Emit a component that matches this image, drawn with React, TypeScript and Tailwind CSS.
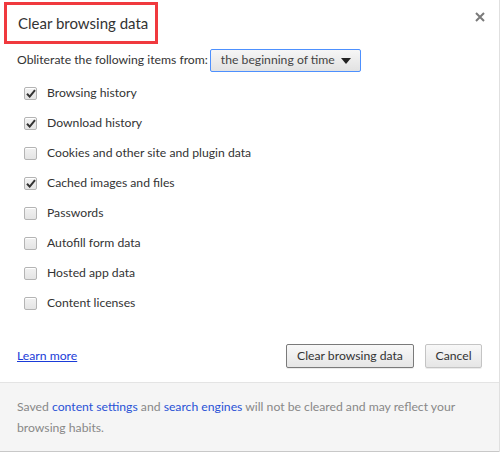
import React from "react";

const items = [
    { label: "Browsing history", checked: true },
    { label: "Download history", checked: true },
    { label: "Cookies and other site and plugin data", checked: false },
    { label: "Cached images and files", checked: true },
    { label: "Passwords", checked: false },
    { label: "Autofill form data", checked: false },
    { label: "Hosted app data", checked: false },
    { label: "Content licenses", checked: false },
];

function Check({ checked }: { checked: boolean }) {
    return (
        <span className="flex h-[13px] w-[13px] items-center justify-center rounded-[2px] border border-[#b4b4b4] bg-gradient-to-b from-[#f2f2f2] to-[#e4e4e4] shadow-[inset_0_1px_0_#fff]">
            {checked && (
                <svg width="10" height="9" viewBox="0 0 10 9">
                    <path d="M1 4.8 L3.7 7.6 L9 1.2" fill="none" stroke="#333" strokeWidth="2" />
                </svg>
            )}
        </span>
    );
}

export default function App() {
    const [state, setState] = React.useState(items.map((i) => i.checked));

    return (
        <div
            className="flex h-[452px] w-[500px] flex-col border-r border-[#e0e0e0] bg-white text-[12.2px] text-[#333]"
            style={{ fontFamily: 'Lato, "Open Sans", sans-serif' }}
        >
            <div className="flex items-start justify-between">
                <div className="ml-[4px] mt-[2px] flex h-[42px] w-[154px] items-center border-[3px] border-[#f0393e] pl-[11px]">
                    <h1 className="whitespace-nowrap text-[15px] text-[#333]">Clear browsing data</h1>
                </div>
                <button className="mr-[10px] mt-[8px] p-1 text-[#777]">
                    <svg width="10" height="10" viewBox="0 0 10 10">
                        <path d="M1 1 L9 9 M9 1 L1 9" stroke="#7a7a7a" strokeWidth="2" />
                    </svg>
                </button>
            </div>

            <div className="mt-[5px] flex items-center gap-[2px] pl-[17px]">
                <span className="whitespace-nowrap">Obliterate the following items from:</span>
                <button className="flex h-[23px] w-[151px] items-center justify-between whitespace-nowrap rounded-[2px] border border-[#4d90fe] bg-gradient-to-b from-[#f6f6f6] to-[#e2e2e2] pl-[10px] pr-[9px] text-[#444]">
                    <span>the beginning of time</span>
                    <svg width="10" height="6" viewBox="0 0 10 6">
                        <path d="M0 0 H10 L5 6 Z" fill="#222" />
                    </svg>
                </button>
            </div>

            <div className="mt-[6px] flex flex-col pl-[24px]">
                {items.map((item, i) => (
                    <label
                        key={item.label}
                        className="flex h-[30px] cursor-pointer items-center gap-[10px]"
                        onClick={() => setState(state.map((v, j) => (j === i ? !v : v)))}
                    >
                        <Check checked={state[i]} />
                        <span className="text-[#333]">{item.label}</span>
                    </label>
                ))}
            </div>

            <div className="mt-[26px] flex items-center justify-between pl-[17px] pr-[17px]">
                <a href="#" className="text-[#1a3bd8] underline">
                    Learn more
                </a>
                <div className="flex gap-[11px]">
                    <button className="h-[24px] w-[128px] rounded-[2px] border border-[#7a7a7a] bg-gradient-to-b from-[#f8f8f8] to-[#e6e6e6] text-[#333] shadow-[0_1px_0_rgba(0,0,0,0.08)]">
                        Clear browsing data
                    </button>
                    <button className="h-[24px] w-[57px] rounded-[2px] border border-[#c4c4c4] bg-gradient-to-b from-[#f8f8f8] to-[#e6e6e6] text-[#333] shadow-[0_1px_0_rgba(0,0,0,0.08)]">
                        Cancel
                    </button>
                </div>
            </div>

            <div className="mt-[14px] flex-1 border-t border-b border-[#e4e4e4] border-b-[#c8c8c8] bg-[#f5f5f5] pl-[17px] pr-[30px] pt-[13px] leading-[21px] text-[#888]">
                Saved <a href="#" className="text-[#2952d6]">content settings</a> and{" "}
                <a href="#" className="text-[#2952d6]">search engines</a> will not be cleared and may reflect your
                browsing habits.
            </div>
        </div>
    );
}
